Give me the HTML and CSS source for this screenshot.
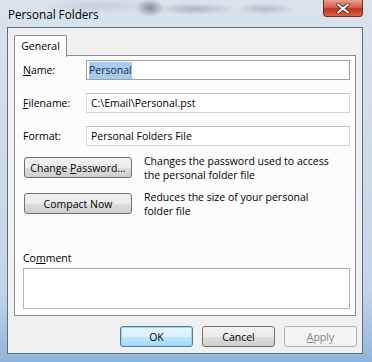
FILE: index.html
```html
<!DOCTYPE html>
<html lang="en">

<head>
  <meta charset="UTF-8">
  <title>Personal Folders</title>
  <link rel="stylesheet" href="styles.css">
</head>

<body>

  <div class="window">
    <div class="titlebar">
      <span class="title">Personal Folders</span>
      <div class="close-btn">
        <svg width="14" height="11" viewBox="0 0 14 11">
          <path d="M2 1.5 L12 9.5 M12 1.5 L2 9.5" stroke="#6b2a22" stroke-width="3.6" stroke-linecap="round" />
          <path d="M2 1.5 L12 9.5 M12 1.5 L2 9.5" stroke="#ffffff" stroke-width="2" stroke-linecap="round" />
        </svg>
      </div>
    </div>

    <div class="client">
      <div class="tabs">
        <div class="tab">General</div>
      </div>

      <div class="panel">
        <div class="field-row">
          <label><u>N</u>ame:</label>
          <div class="textbox focused"><span class="selected">Personal</span></div>
        </div>
        <div class="field-row">
          <label><u>F</u>ilename:</label>
          <div class="textbox readonly">C:\Email\Personal.pst</div>
        </div>
        <div class="field-row">
          <label>Format:</label>
          <div class="textbox readonly">Personal Folders File</div>
        </div>

        <div class="action-row first">
          <button class="btn action">Change <u>P</u>assword...</button>
          <p class="desc">Changes the password used to access<br>the personal folder file</p>
        </div>
        <div class="action-row">
          <button class="btn action">Compact Now</button>
          <p class="desc">Reduces the size of your personal<br>folder file</p>
        </div>

        <div class="comment">
          <label>Co<u>m</u>ment</label>
          <div class="textarea"></div>
        </div>
      </div>

      <div class="dialog-buttons">
        <button class="btn default">OK</button>
        <button class="btn">Cancel</button>
        <button class="btn disabled"><u>A</u>pply</button>
      </div>
    </div>
  </div>

</body>

</html>
```

FILE: styles.css
```css
body {
  margin: 0;
  font-family: "Open Sans", "Liberation Sans", sans-serif;
  font-size: 10.5px;
  color: #000;
}

.window {
  width: 372px;
  height: 362px;
  box-sizing: border-box;
  padding: 0 9px 8px 7px;
  display: flex;
  flex-direction: column;
  background:
    radial-gradient(ellipse 14px 9px at 150px 8px, rgba(60, 70, 90, 0.55), transparent),
    radial-gradient(ellipse 40px 6px at 195px 9px, rgba(90, 100, 120, 0.35), transparent),
    radial-gradient(ellipse 30px 6px at 265px 9px, rgba(90, 100, 120, 0.3), transparent),
    radial-gradient(ellipse 60px 8px at 100px 6px, rgba(120, 130, 150, 0.2), transparent),
    linear-gradient(to bottom, #d9e3ec 0, #cfdbe7 40%, #c3d5e8 80%, #8fb5dc 100%);
}

.titlebar {
  height: 27px;
  display: flex;
  align-items: flex-start;
}

.title {
  padding: 6px 0 0 1px;
  font-size: 11.7px;
  color: #000;
}

.close-btn {
  margin-left: auto;
  width: 40px;
  height: 17px;
  box-sizing: border-box;
  border: 1px solid #6d2e26;
  border-top: none;
  border-radius: 0 0 4px 4px;
  background: linear-gradient(to bottom, #e8a08f 0, #d6614c 45%, #c0341c 55%, #d8624a 100%);
  display: flex;
  align-items: center;
  justify-content: center;
}

.client {
  flex: 1;
  background-color: #f0f0f0;
  border: 1px solid #5d6d7d;
  padding: 7px 6px 0 6px;
  display: flex;
  flex-direction: column;
}

.tabs {
  display: flex;
  height: 20px;
}

.tab {
  position: relative;
  z-index: 1;
  width: 51px;
  height: 21px;
  border: 1px solid #898c95;
  border-bottom: none;
  background-color: #fcfcfc;
  border-radius: 2px 2px 0 0;
  text-align: center;
  line-height: 20px;
}

.panel {
  height: 261px;
  box-sizing: border-box;
  border: 1px solid #898c95;
  background-color: #fcfcfc;
  padding: 4px 5px 6px 8px;
  display: flex;
  flex-direction: column;
}

.field-row {
  display: flex;
  align-items: center;
  height: 20px;
  margin-bottom: 13px;
}

.field-row label {
  width: 63px;
}

.textbox {
  flex: 1;
  height: 20px;
  box-sizing: border-box;
  border: 1px solid #d5d5d5;
  border-top-color: #c3c3c3;
  background-color: #fff;
  padding: 0 0 0 4px;
  line-height: 18px;
  white-space: nowrap;
}

.textbox.focused {
  border-color: #a0a0a0;
  padding-left: 2px;
}

.selected {
  background-color: #a6ccf1;
  color: #1c2b47;
  padding: 1px 0 2px;
}

.action-row {
  display: flex;
  align-items: flex-start;
  margin-left: 1px;
  margin-bottom: 11px;
}

.action-row.first {
  margin-top: -2px;
}

.desc {
  margin: -3px 0 0 12px;
  line-height: 14px;
}

.btn {
  font-family: inherit;
  font-size: 10.5px;
  height: 21px;
  padding: 0;
  border: 1px solid #707070;
  border-radius: 3px;
  background: linear-gradient(to bottom, #f2f2f2 0, #ebebeb 50%, #dddddd 51%, #cfcfcf 100%);
  color: #000;
}

.btn.action {
  width: 108px;
}

.comment {
  margin-top: auto;
  display: flex;
  flex-direction: column;
}

.comment label {
  line-height: 14px;
  margin-bottom: 3px;
}

.textarea {
  height: 41px;
  box-sizing: border-box;
  border: 1px solid #b5b5b5;
  border-top-color: #a8a8a8;
  background-color: #fff;
}

.dialog-buttons {
  display: flex;
  justify-content: flex-end;
  gap: 9px;
  margin: 10px -1px 0 0;
}

.dialog-buttons .btn {
  width: 73px;
}

.btn.default {
  border-color: #3c7fb1;
  background: linear-gradient(to bottom, #eaf6fd 0, #d9f0fc 50%, #bee6fd 51%, #a7d9f5 100%);
  box-shadow: inset 0 0 0 1px #9bd4f5;
}

.btn.disabled {
  border-color: #adb2b5;
  background: #f4f4f4;
  color: #838383;
}
```
